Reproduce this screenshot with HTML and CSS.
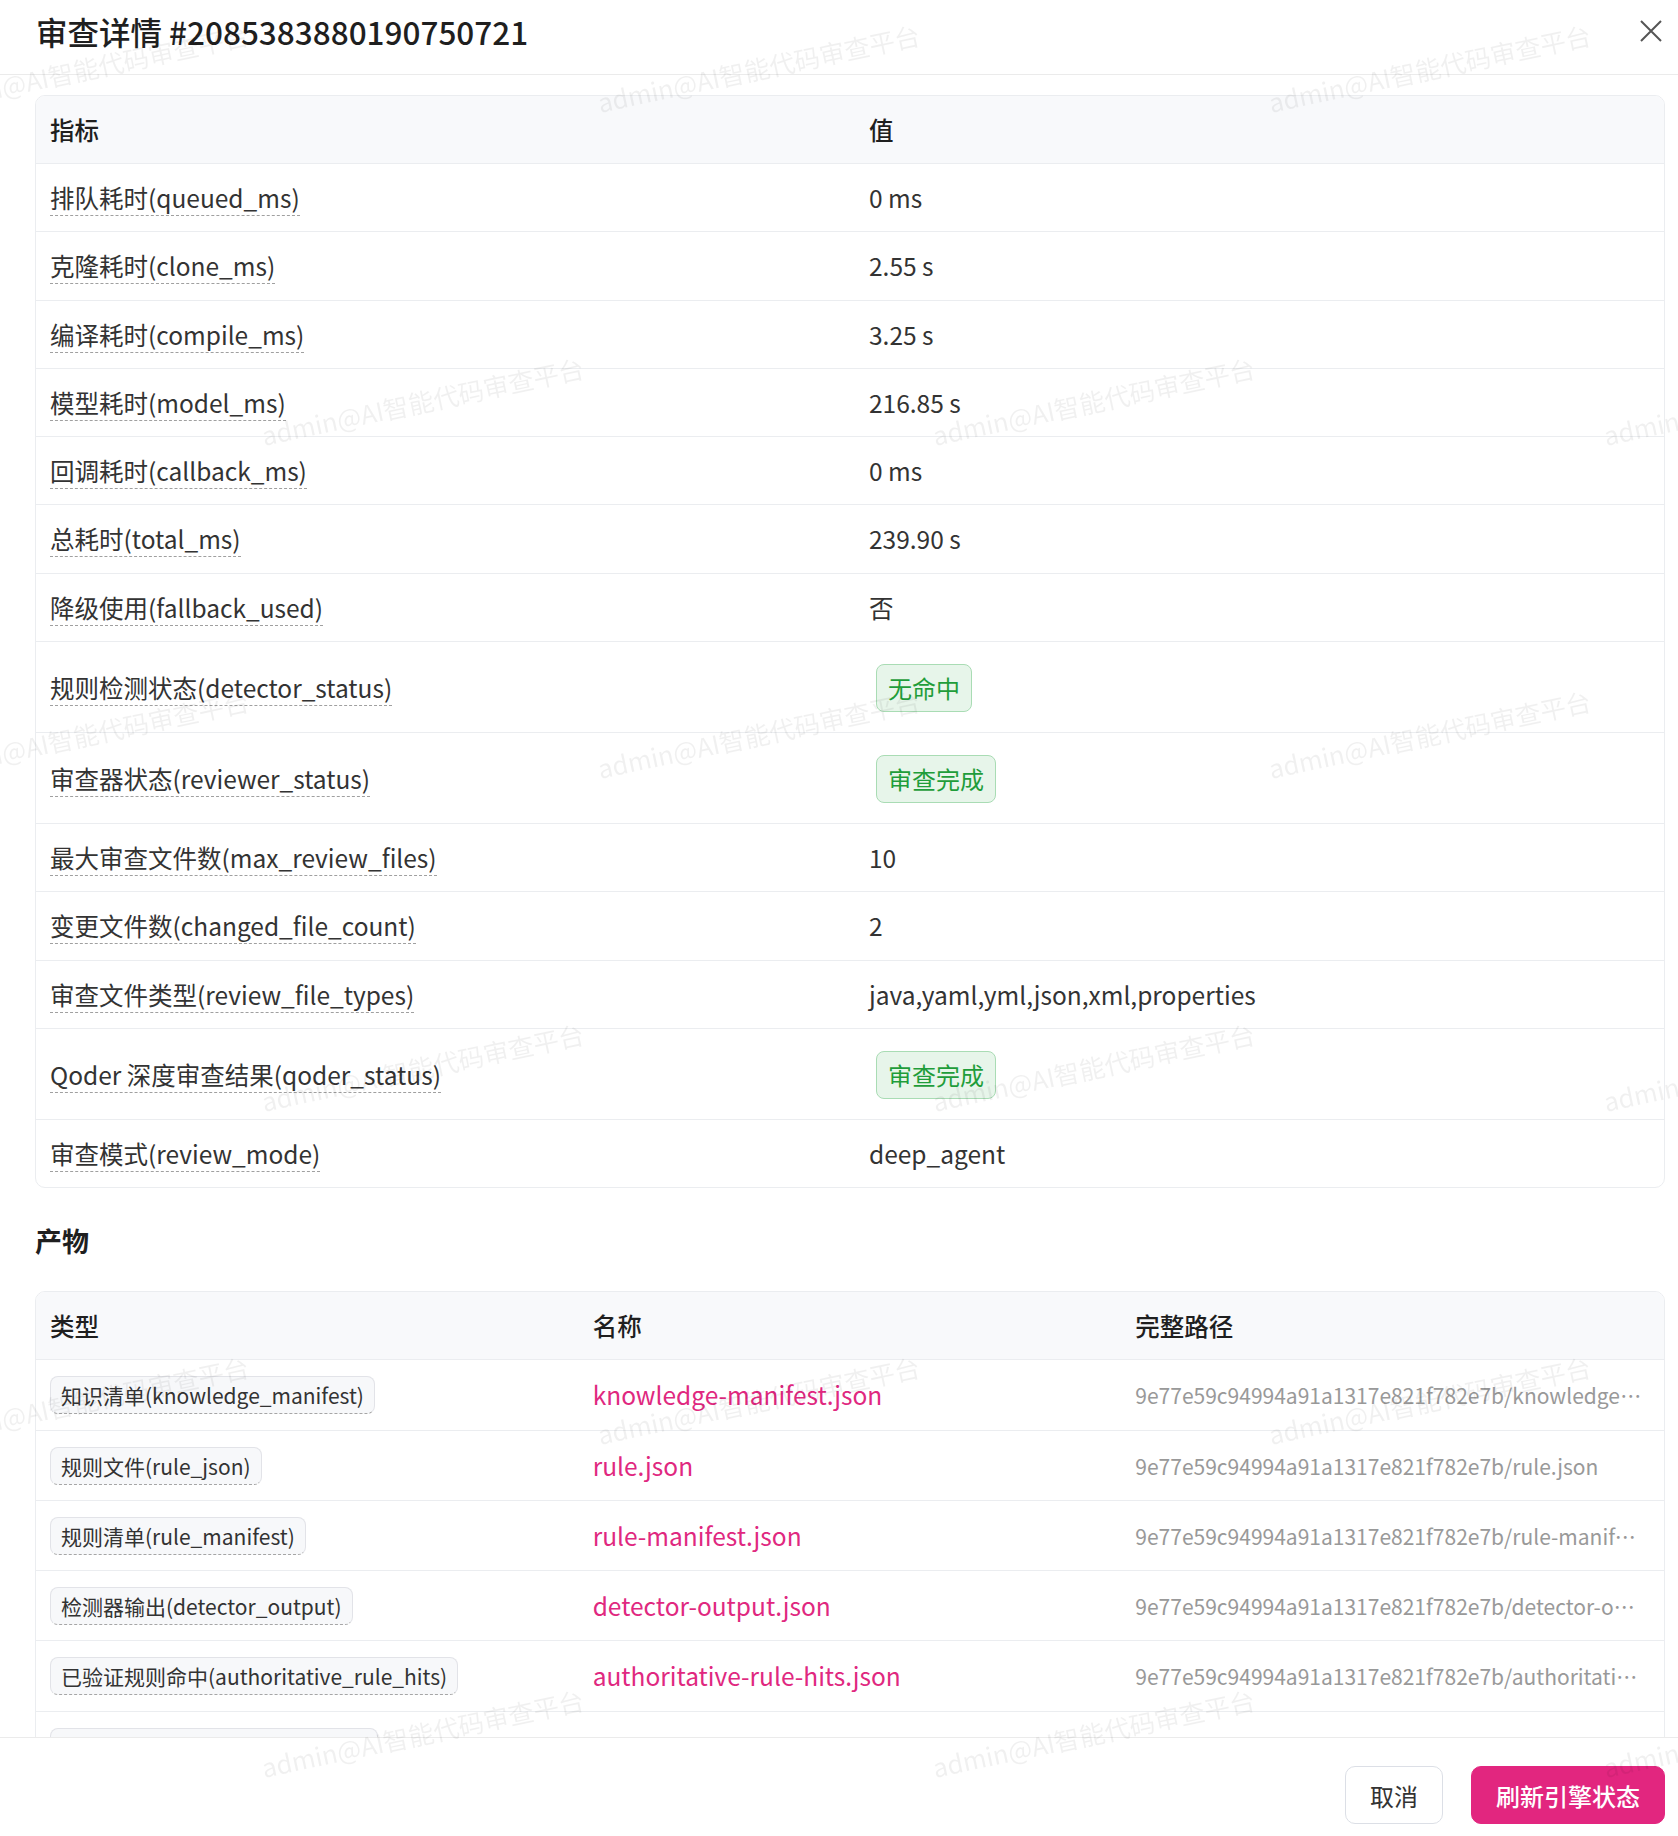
FILE: index.html
```html
<!DOCTYPE html>
<html lang="zh-CN">
<head>
  <meta charset="UTF-8">
  <meta name="viewport" content="width=device-width, initial-scale=1.0">
  <title>审查详情</title>
  <link rel="stylesheet" href="styles.css">
</head>
<body>
  <div class="dialog">
    <div class="dialog-header">
      <h2 class="dialog-title">审查详情 #2085383880190750721</h2>
      <button class="close-btn" aria-label="关闭">
        <svg width="22" height="22" viewBox="0 0 22 22">
          <path d="M1 1 L21 21 M21 1 L1 21" stroke="#555" stroke-width="2" fill="none"/>
        </svg>
      </button>
    </div>

    <div class="dialog-body">
      <div class="table-wrap">
        <table class="table metrics">
          <thead>
            <tr><th class="col-name">指标</th><th>值</th></tr>
          </thead>
          <tbody>
            <tr><td><span class="metric">排队耗时(queued_ms)</span></td><td>0 ms</td></tr>
            <tr><td><span class="metric">克隆耗时(clone_ms)</span></td><td>2.55 s</td></tr>
            <tr><td><span class="metric">编译耗时(compile_ms)</span></td><td>3.25 s</td></tr>
            <tr><td><span class="metric">模型耗时(model_ms)</span></td><td>216.85 s</td></tr>
            <tr><td><span class="metric">回调耗时(callback_ms)</span></td><td>0 ms</td></tr>
            <tr><td><span class="metric">总耗时(total_ms)</span></td><td>239.90 s</td></tr>
            <tr><td><span class="metric">降级使用(fallback_used)</span></td><td>否</td></tr>
            <tr class="row-tag"><td><span class="metric">规则检测状态(detector_status)</span></td><td><span class="badge">无命中</span></td></tr>
            <tr class="row-tag"><td><span class="metric">审查器状态(reviewer_status)</span></td><td><span class="badge">审查完成</span></td></tr>
            <tr><td><span class="metric">最大审查文件数(max_review_files)</span></td><td>10</td></tr>
            <tr><td><span class="metric">变更文件数(changed_file_count)</span></td><td>2</td></tr>
            <tr><td><span class="metric">审查文件类型(review_file_types)</span></td><td>java,yaml,yml,json,xml,properties</td></tr>
            <tr class="row-tag"><td><span class="metric">Qoder 深度审查结果(qoder_status)</span></td><td><span class="badge">审查完成</span></td></tr>
            <tr><td><span class="metric">审查模式(review_mode)</span></td><td>deep_agent</td></tr>
          </tbody>
        </table>
      </div>

      <h3 class="section-title">产物</h3>

      <div class="table-wrap">
        <table class="table artifacts">
          <thead>
            <tr><th>类型</th><th>名称</th><th>完整路径</th></tr>
          </thead>
          <tbody>
            <tr>
              <td><span class="type-tag">知识清单(knowledge_manifest)</span></td>
              <td class="file-name">knowledge-manifest.json</td>
              <td class="file-path">9e77e59c94994a91a1317e821f782e7b/knowledge-manifest.json</td>
            </tr>
            <tr>
              <td><span class="type-tag">规则文件(rule_json)</span></td>
              <td class="file-name">rule.json</td>
              <td class="file-path">9e77e59c94994a91a1317e821f782e7b/rule.json</td>
            </tr>
            <tr>
              <td><span class="type-tag">规则清单(rule_manifest)</span></td>
              <td class="file-name">rule-manifest.json</td>
              <td class="file-path">9e77e59c94994a91a1317e821f782e7b/rule-manifest.json</td>
            </tr>
            <tr>
              <td><span class="type-tag">检测器输出(detector_output)</span></td>
              <td class="file-name">detector-output.json</td>
              <td class="file-path">9e77e59c94994a91a1317e821f782e7b/detector-output.json</td>
            </tr>
            <tr>
              <td><span class="type-tag">已验证规则命中(authoritative_rule_hits)</span></td>
              <td class="file-name">authoritative-rule-hits.json</td>
              <td class="file-path">9e77e59c94994a91a1317e821f782e7b/authoritative-rule-hits.json</td>
            </tr>
            <tr>
              <td><span class="type-tag">审查报告(review_findings_json)</span></td>
              <td class="file-name"></td>
              <td class="file-path"></td>
            </tr>
          </tbody>
        </table>
      </div>
    </div>

    <div class="dialog-footer">
      <button class="btn">取消</button>
      <button class="btn btn-primary">刷新引擎状态</button>
    </div>
  </div>

  <!-- 水印 -->
  <div class="watermark">
    <div class="wm-grid">
      <div class="wm-row"><span>admin@AI智能代码审查平台</span><span>admin@AI智能代码审查平台</span><span>admin@AI智能代码审查平台</span></div>
      <div class="wm-row shift"><span>admin@AI智能代码审查平台</span><span>admin@AI智能代码审查平台</span><span>admin@AI智能代码审查平台</span></div>
      <div class="wm-row"><span>admin@AI智能代码审查平台</span><span>admin@AI智能代码审查平台</span><span>admin@AI智能代码审查平台</span></div>
      <div class="wm-row shift"><span>admin@AI智能代码审查平台</span><span>admin@AI智能代码审查平台</span><span>admin@AI智能代码审查平台</span></div>
      <div class="wm-row"><span>admin@AI智能代码审查平台</span><span>admin@AI智能代码审查平台</span><span>admin@AI智能代码审查平台</span></div>
      <div class="wm-row shift"><span>admin@AI智能代码审查平台</span><span>admin@AI智能代码审查平台</span><span>admin@AI智能代码审查平台</span></div>
    </div>
  </div>
</body>
</html>
```

FILE: styles.css
```css
html, body {
  margin: 0;
  height: 100%;
}
body {
  font-family: "Noto Sans CJK SC", "Noto Sans", sans-serif;
  font-size: 24.5px;
  color: #333;
  background-color: #fff;
  overflow: hidden;
}
.dialog {
  display: flex;
  flex-direction: column;
  height: 100vh;
}
.dialog-header {
  display: flex;
  justify-content: space-between;
  align-items: center;
  padding: 10px 16px 22px 36px;
  border-bottom: 1px solid #ebebeb;
}
.dialog-title {
  margin: 0;
  font-size: 31.5px;
  font-weight: 500;
  line-height: 42px;
  color: #1f1f1f;
}
.close-btn {
  display: flex;
  padding: 0;
  border: none;
  background: none;
}
.dialog-body {
  flex: 1;
  overflow: hidden;
  padding: 20px 13px 0 35px;
}
.table-wrap {
  border: 1px solid #ebedf0;
  border-radius: 10px;
  overflow: hidden;
}
.table {
  width: 100%;
  border-collapse: separate;
  border-spacing: 0;
  table-layout: fixed;
}
.table th {
  text-align: left;
  font-weight: 500;
  color: #1f1f1f;
  background-color: #f8f9fb;
  padding: 14px 14px;
  line-height: 39px;
  border-bottom: 1px solid #ebedf0;
}
.table td {
  padding: 14px 14px;
  line-height: 39.3px;
  border-bottom: 1px solid #ebedf0;
  vertical-align: middle;
}
.table tbody tr:last-child td {
  border-bottom: none;
}
.metrics .col-name {
  width: 791px;
}
.metric {
  border-bottom: 1px dashed #a0a0a0;
  color: #333;
}
.metrics .row-tag td {
  padding-top: 22px;
  padding-bottom: 20px;
}
.badge {
  display: inline-block;
  vertical-align: top;
  margin-left: 7px;
  font-size: 24px;
  line-height: 46px;
  padding: 0 11px;
  border: 1px solid #a9dcb4;
  border-radius: 8px;
  background-color: #e7f5ea;
  color: #1f9d3a;
}
.section-title {
  margin: 33px 0 30px;
  font-size: 27px;
  font-weight: 600;
  line-height: 40px;
  color: #1f1f1f;
}
.artifacts td {
  padding: 16px 14px 15px;
  line-height: 38.3px;
}
.type-tag {
  display: inline-block;
  vertical-align: top;
  font-size: 21px;
  line-height: 36px;
  padding: 0 10px;
  border: 1px solid #e2e3e8;
  border-bottom: 1px dashed #a6a6a6;
  border-radius: 8px;
  background-color: #f7f8fa;
  color: #333;
}
.file-name {
  color: #e0287f;
  white-space: nowrap;
}
.artifacts .file-path {
  color: #999;
  font-size: 21px;
  padding-right: 22px;
  white-space: nowrap;
  overflow: hidden;
  text-overflow: ellipsis;
}
.dialog-footer {
  display: flex;
  justify-content: flex-end;
  gap: 28px;
  padding: 28px 13px 12px;
  border-top: 1px solid #ebebeb;
}
.btn {
  font-family: inherit;
  font-size: 24px;
  height: 58px;
  padding: 0 24px;
  border: 1px solid #dcdfe6;
  border-radius: 10px;
  background-color: #fff;
  color: #333;
}
.btn-primary {
  border-color: #e2267f;
  background-color: #e2267f;
  color: #fff;
  font-weight: 500;
}

/* 水印 */
.watermark {
  position: fixed;
  top: 0;
  left: 0;
  right: 0;
  bottom: 0;
  overflow: hidden;
  pointer-events: none;
  z-index: 10;
}
.wm-grid {
  margin-top: -99px;
}
.wm-row {
  display: flex;
  align-items: center;
  height: 333px;
  margin-left: -248px;
}
.wm-row.shift {
  margin-left: 87px;
}
.wm-row span {
  flex: 0 0 671px;
  text-align: center;
  white-space: nowrap;
  font-size: 25.6px;
  color: rgba(0, 0, 0, 0.06);
  transform: rotate(-12deg);
}
```
